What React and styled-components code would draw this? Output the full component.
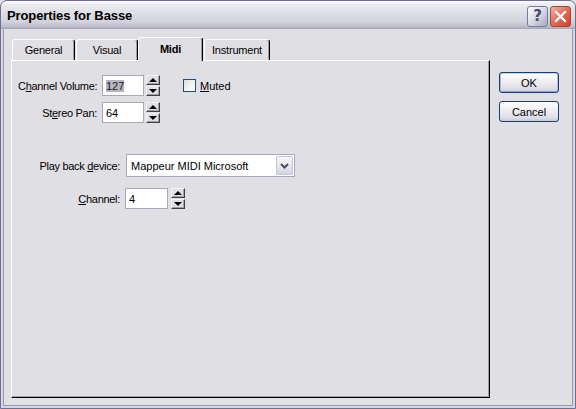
import React from "react";
import styled, { createGlobalStyle, css } from "styled-components";

const GlobalStyle = createGlobalStyle`
  html, body {
    margin: 0;
    padding: 0;
    background: #e0dfe3;
  }
  * {
    box-sizing: border-box;
  }
`;

const Window = styled.div`
  width: 576px;
  height: 409px;
  display: flex;
  flex-direction: column;
  border: 1px solid #6f6f8f;
  border-radius: 7px 7px 0 0;
  background: #e0dfe3;
  font-family: "Liberation Sans", Arial, sans-serif;
  font-size: 11px;
  color: #000;
  overflow: hidden;
`;

const TitleBar = styled.div`
  height: 28px;
  flex: none;
  display: flex;
  align-items: center;
  justify-content: space-between;
  padding: 0 4px 0 6px;
  background: linear-gradient(
    to bottom,
    #ffffff 0%,
    #ebebf1 12%,
    #dedee6 45%,
    #d2d2dc 75%,
    #bcbccc 92%,
    #a4a4b8 100%
  );
  border-radius: 6px 6px 0 0;
`;

const Title = styled.div`
  font-size: 13px;
  font-weight: bold;
  color: #000;
  letter-spacing: -0.1px;
  padding-top: 1px;
`;

const TitleButtons = styled.div`
  display: flex;
  gap: 2px;
  padding-top: 2px;
`;

const CaptionButton = styled.div`
  width: 21px;
  height: 21px;
  border-radius: 3px;
  display: flex;
  align-items: center;
  justify-content: center;
  ${(p) =>
    p.$close
      ? css`
          border: 1px solid #a04434;
          background: linear-gradient(135deg, #f2b4a6 0%, #e0735e 45%, #c8442e 100%);
        `
      : css`
          border: 1px solid #7a7a98;
          background: linear-gradient(135deg, #ffffff 0%, #d8d8e4 50%, #a8a8c0 100%);
          color: #4a4a6a;
          font-weight: bold;
          font-size: 15px;
          font-family: "DejaVu Sans", sans-serif;
        `}
`;

const Frame = styled.div`
  flex: 1;
  display: flex;
  align-items: flex-start;
  padding: 8px 0 0 10px;
  box-shadow: inset 2px 0 0 #d6d6e0, inset -2px 0 0 #d6d6e0, inset 0 -2px 0 #d6d6e0,
    inset 3px 0 0 #9a9ab2, inset -3px 0 0 #9a9ab2, inset 0 -3px 0 #9a9ab2;
`;

const TabArea = styled.div`
  width: 479px;
  display: flex;
  flex-direction: column;
`;

const TabRow = styled.div`
  height: 23px;
  display: flex;
  align-items: flex-end;
  position: relative;
  z-index: 1;
`;

const Tab = styled.div`
  width: ${(p) => p.$w}px;
  margin-left: ${(p) => p.$ml}px;
  height: ${(p) => (p.$active ? 24 : 21)}px;
  margin-bottom: ${(p) => (p.$active ? -1 : 0)}px;
  display: flex;
  align-items: center;
  justify-content: center;
  padding-bottom: ${(p) => (p.$active ? 2 : 0)}px;
  background: #e0dfe3;
  border-left: 1px solid #ffffff;
  border-top: 1px solid #ffffff;
  border-right: 1px solid #000000;
  border-radius: 3px 3px 0 0;
  box-shadow: inset -1px 0 0 #a0a0a0;
  font-weight: ${(p) => (p.$active ? "bold" : "normal")};
  letter-spacing: -0.2px;
`;

const Panel = styled.div`
  height: 338px;
  border-left: 1px solid #ffffff;
  border-top: 1px solid #ffffff;
  border-right: 1px solid #000000;
  border-bottom: 1px solid #000000;
  box-shadow: inset -1px 0 0 #a0a0a0, inset 0 -1px 0 #a0a0a0;
  padding: 14px 0 0 6px;
`;

const Group = styled.div`
  display: flex;
  flex-direction: column;
  gap: ${(p) => p.$gap}px;
  margin-top: ${(p) => p.$top || 0}px;
`;

const Row = styled.div`
  display: flex;
  align-items: center;
  height: ${(p) => p.$h}px;
`;

const Label = styled.div`
  width: ${(p) => p.$w}px;
  margin-right: ${(p) => p.$gap}px;
  text-align: right;
  white-space: nowrap;
  letter-spacing: -0.3px;
`;

const EditBox = styled.div`
  width: ${(p) => p.$w}px;
  height: 21px;
  border: 1px solid #a5a9b8;
  background: #ffffff;
  display: flex;
  align-items: center;
  padding-left: 3px;
`;

const Selected = styled.span`
  background: #b4b4c2;
  color: #1a1a1a;
`;

const Spin = styled.div`
  width: 14px;
  height: 21px;
  margin-left: ${(p) => p.$ml}px;
  display: flex;
  flex-direction: column;
  gap: 1px;
`;

const SpinHalf = styled.div`
  flex: 1;
  display: flex;
  align-items: center;
  justify-content: center;
  background: #e0dfe3;
  border: 1px solid;
  border-color: #f4f4f4 #404040 #404040 #f4f4f4;
  box-shadow: inset -1px -1px 0 #a0a0a8;
`;

const Arrow = styled.div`
  width: 0;
  height: 0;
  border-left: 4px solid transparent;
  border-right: 4px solid transparent;
  ${(p) =>
    p.$down
      ? css`
          border-top: 4px solid #000;
        `
      : css`
          border-bottom: 4px solid #000;
        `}
`;

const CheckWrap = styled.div`
  display: flex;
  align-items: center;
  margin-left: 23px;
  gap: 4px;
`;

const CheckBox = styled.div`
  width: 13px;
  height: 13px;
  border: 1px solid #1c5180;
  background: linear-gradient(135deg, #dcdcd7 0%, #f4f4f2 60%, #ffffff 100%);
`;

const Select = styled.div`
  width: 169px;
  height: 23px;
  border: 1px solid #a5a9b8;
  background: #ffffff;
  display: flex;
  align-items: center;
  justify-content: space-between;
  padding: 1px 1px 1px 4px;
`;

const DropButton = styled.div`
  width: 17px;
  height: 19px;
  border: 1px solid #c4c8d6;
  border-radius: 1px;
  background: linear-gradient(to bottom, #f8f8fb 0%, #e4e4ec 60%, #d4d4e0 100%);
  display: flex;
  align-items: center;
  justify-content: center;
`;

const SideButtons = styled.div`
  display: flex;
  flex-direction: column;
  gap: 8px;
  margin: 35px 0 0 9px;
`;

const Button = styled.div`
  width: 60px;
  height: 21px;
  border: 1px solid #1d3e6a;
  border-radius: 3px;
  background: linear-gradient(to bottom, #ffffff 0%, #f0f0f4 40%, #dcdce6 85%, #c8c8d6 100%);
  display: flex;
  align-items: center;
  justify-content: center;
  ${(p) =>
    p.$default &&
    css`
      box-shadow: inset 1px 0 0 #a8bce4, inset -1px 0 0 #a8bce4, inset 0 1px 0 #c8d6f0,
        inset 0 -1px 0 #8aa6d8;
    `}
`;

function SpinBox({ ml = 2 }) {
  return (
    <Spin $ml={ml}>
      <SpinHalf>
        <Arrow />
      </SpinHalf>
      <SpinHalf>
        <Arrow $down />
      </SpinHalf>
    </Spin>
  );
}

const tabs = [
  { name: "General", w: 63, ml: 1 },
  { name: "Visual", w: 62, ml: 1 },
  { name: "Midi", w: 65, ml: 0, active: true },
  { name: "Instrument", w: 66, ml: 1 },
];

export default function App() {
  return (
    <>
      <GlobalStyle />
      <Window>
        <TitleBar>
          <Title>Properties for Basse</Title>
          <TitleButtons>
            <CaptionButton>?</CaptionButton>
            <CaptionButton $close>
              <svg width="13" height="13" viewBox="0 0 13 13">
                <path d="M2 2 L11 11 M11 2 L2 11" stroke="#fff" strokeWidth="2.2" strokeLinecap="square" />
              </svg>
            </CaptionButton>
          </TitleButtons>
        </TitleBar>

        <Frame>
          <TabArea>
            <TabRow>
              {tabs.map((t) => (
                <Tab key={t.name} $w={t.w} $ml={t.ml} $active={t.active}>
                  {t.name}
                </Tab>
              ))}
            </TabRow>
            <Panel>
              <Group $gap={6}>
                <Row $h={21}>
                  <Label $w={79} $gap={5}>
                    C<u>h</u>annel Volume:
                  </Label>
                  <EditBox $w={42}>
                    <Selected>127</Selected>
                  </EditBox>
                  <SpinBox />
                  <CheckWrap>
                    <CheckBox />
                    <span>
                      <u>M</u>uted
                    </span>
                  </CheckWrap>
                </Row>
                <Row $h={21}>
                  <Label $w={79} $gap={5}>
                    St<u>e</u>reo Pan:
                  </Label>
                  <EditBox $w={42}>64</EditBox>
                  <SpinBox />
                </Row>
              </Group>

              <Group $gap={11} $top={31}>
                <Row $h={23}>
                  <Label $w={102} $gap={6}>
                    Play back <u>d</u>evice:
                  </Label>
                  <Select>
                    <span>Mappeur MIDI Microsoft</span>
                    <DropButton>
                      <svg width="9" height="6" viewBox="0 0 9 6">
                        <path d="M1 1 L4.5 4.5 L8 1" fill="none" stroke="#4a4a66" strokeWidth="2" />
                      </svg>
                    </DropButton>
                  </Select>
                </Row>
                <Row $h={21}>
                  <Label $w={102} $gap={5}>
                    <u>C</u>hannel:
                  </Label>
                  <EditBox $w={43}>4</EditBox>
                  <SpinBox ml={3} />
                </Row>
              </Group>
            </Panel>
          </TabArea>

          <SideButtons>
            <Button $default>OK</Button>
            <Button>Cancel</Button>
          </SideButtons>
        </Frame>
      </Window>
    </>
  );
}
